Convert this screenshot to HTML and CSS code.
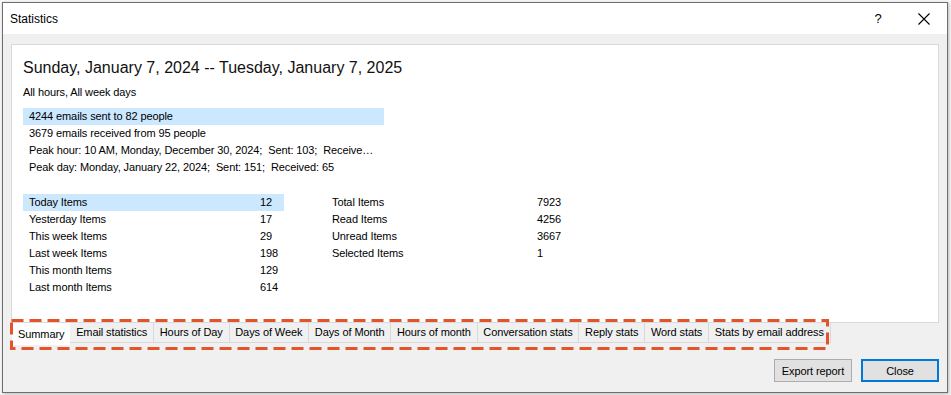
FILE: index.html
```html
<!DOCTYPE html>
<html lang="en">
<head>
  <meta charset="UTF-8">
  <title>Statistics</title>
  <link rel="stylesheet" href="styles.css">
</head>
<body>

  <div class="window">
    <div class="titlebar">
      <span class="title">Statistics</span>
      <span class="help">?</span>
      <span class="close-x">
        <svg width="12" height="12" viewBox="0 0 12 12"><path d="M0.5 0.5 L11.5 11.5 M11.5 0.5 L0.5 11.5" stroke="#000" stroke-width="1.1" fill="none"/></svg>
      </span>
    </div>

    <div class="client">
      <div class="panel">
        <div class="range">Sunday, January 7, 2024 -- Tuesday, January 7, 2025</div>
        <div class="filter">All hours, All week days</div>

        <div class="list summary-list">
          <div class="row selected">4244 emails sent to 82 people</div>
          <div class="row">3679 emails received from 95 people</div>
          <div class="row">Peak hour: 10 AM, Monday, December 30, 2024;  Sent: 103;  Receive…</div>
          <div class="row">Peak day: Monday, January 22, 2024;  Sent: 151;  Received: 65</div>
        </div>

        <div class="counts">
          <div class="list left-list">
            <div class="row selected"><span class="label">Today Items</span><span>12</span></div>
            <div class="row"><span class="label">Yesterday Items</span><span>17</span></div>
            <div class="row"><span class="label">This week Items</span><span>29</span></div>
            <div class="row"><span class="label">Last week Items</span><span>198</span></div>
            <div class="row"><span class="label">This month Items</span><span>129</span></div>
            <div class="row"><span class="label">Last month Items</span><span>614</span></div>
          </div>
          <div class="list right-list">
            <div class="row"><span class="label">Total Items</span><span>7923</span></div>
            <div class="row"><span class="label">Read Items</span><span>4256</span></div>
            <div class="row"><span class="label">Unread Items</span><span>3667</span></div>
            <div class="row"><span class="label">Selected Items</span><span>1</span></div>
          </div>
        </div>
      </div>

      <div class="tabs">
        <div class="tab active">Summary</div>
        <div class="tab">Email statistics</div>
        <div class="tab">Hours of Day</div>
        <div class="tab">Days of Week</div>
        <div class="tab">Days of Month</div>
        <div class="tab">Hours of month</div>
        <div class="tab">Conversation stats</div>
        <div class="tab">Reply stats</div>
        <div class="tab">Word stats</div>
        <div class="tab">Stats by email address</div>
        <svg class="mark" width="819" height="31" viewBox="0 0 819 31">
          <rect x="1.5" y="1.5" width="816" height="28" fill="none" stroke="#e2552a" stroke-width="3" stroke-dasharray="12 6"/>
        </svg>
      </div>

      <div class="buttons">
        <button class="btn">Export report</button>
        <button class="btn default">Close</button>
      </div>
    </div>
  </div>

</body>
</html>
```

FILE: styles.css
```css
body {
  margin: 0;
  padding: 2px 3px 2px 2px;
  background-color: #f7f7f7;
  font-family: "Liberation Sans", Arial, sans-serif;
  font-size: 11px;
  letter-spacing: -0.1px;
  color: #000;
}

.window {
  border: 1px solid #6e6e6e;
  height: 389px;
  background-color: #f0f0f0;
  box-shadow: 1px 1px 3px rgba(0,0,0,0.25);
  display: flex;
  flex-direction: column;
}

.titlebar {
  height: 31px;
  background-color: #fff;
  display: flex;
  align-items: center;
  padding-left: 7px;
  font-size: 12px;
  letter-spacing: 0;
}

.title {
  flex: 1;
}

.help {
  font-size: 13px;
  width: 46px;
  text-align: center;
}

.close-x {
  width: 46px;
  display: flex;
  justify-content: center;
}

.client {
  flex: 1;
  padding: 10px 8px 0 8px;
  display: flex;
  flex-direction: column;
}

.panel {
  background-color: #fff;
  border: 1px solid #dadada;
  height: 255px;
  padding: 11px 11px 11px 11px;
}

.range {
  font-size: 16px;
  line-height: 24px;
  letter-spacing: 0;
  color: #111;
}

.filter {
  margin-top: 4px;
  line-height: 16px;
}

.list {
  line-height: 17px;
}

.row {
  display: flex;
  padding-left: 6px;
  white-space: pre;
  overflow: hidden;
}

.row.selected {
  background-color: #cce8ff;
}

.summary-list {
  margin-top: 8px;
  width: 361px;
}

.summary-list .row {
  display: block;
}

.counts {
  display: flex;
  margin-top: 18px;
}

.left-list {
  width: 261px;
}

.left-list .label {
  width: 231px;
}

.right-list {
  margin-left: 42px;
  width: 261px;
}

.right-list .label {
  width: 205px;
}

.tabs {
  position: relative;
  display: flex;
  align-items: flex-start;
  height: 22px;
  padding-left: 1px;
}

.tab {
  flex-shrink: 0;
  white-space: nowrap;
  height: 19px;
  line-height: 18px;
  padding: 0 5.75px;
  border: 1px solid #d9d9d9;
  border-top: none;
  margin-left: -1px;
  background-color: #f0f0f0;
}

.tab.active {
  height: 21px;
  line-height: 23px;
  background-color: #fff;
  border-color: #fff;
  padding: 0 5px;
  margin-left: 0;
  position: relative;
}

.mark {
  position: absolute;
  left: -1px;
  top: -4px;
}

.buttons {
  display: flex;
  justify-content: flex-end;
  gap: 9px;
  margin-top: 14px;
}

.btn {
  font-family: inherit;
  font-size: 11px;
  letter-spacing: -0.1px;
  height: 23px;
  width: 78px;
  padding: 0;
  background-color: #e1e1e1;
  border: 1px solid #adadad;
  color: #000;
}

.btn.default {
  border: 2px solid #0078d7;
}
```
